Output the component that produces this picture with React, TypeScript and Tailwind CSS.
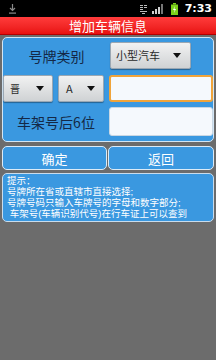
import React from 'react';

const FONT = { fontFamily: '"Noto Sans CJK SC", "Noto Sans", sans-serif' };
// latin primary font keeps line boxes short; CJK glyphs fall through to Noto
const TIP_FONT = { fontFamily: '"Liberation Sans", "Noto Sans CJK SC", sans-serif' };

// small black triangle used by spinner-like selects
const Caret: React.FC = () => (
  <svg width="8" height="5" viewBox="0 0 8 5" className="shrink-0">
    <path d="M0 0 L8 0 L4 5 Z" fill="#111" />
  </svg>
);

const Spinner: React.FC<{ label: string; className: string; textClass?: string }> = ({ label, className, textClass }) => (
  <div
    className={`flex items-center justify-between rounded-[2px] border border-[#9aa7b3] bg-linear-to-b from-[#f2f2f2] to-[#cfd2d4] shadow-[0_1px_1px_rgba(0,0,0,0.35)] ${className}`}
  >
    <span className={`text-[#2a2a2a] leading-none ${textClass ?? 'text-[11px]'}`}>{label}</span>
    <Caret />
  </div>
);

const StatusBar: React.FC = () => (
  <div className="flex h-[17px] items-center justify-between bg-black pl-[8px] pr-[4px]">
    <svg width="9" height="10" viewBox="0 0 9 10">
      <path d="M4.5 0 V6 M2 4 L4.5 6.5 L7 4" stroke="#8a8a8a" strokeWidth="1.2" fill="none" />
      <rect x="1" y="8.5" width="7" height="1.2" fill="#8a8a8a" />
    </svg>
    <div className="flex items-center">
      <svg width="8" height="10" viewBox="0 0 8 10" className="mr-[4px]">
        <rect x="0" y="1" width="3" height="1" fill="#bbb" />
        <rect x="0" y="3" width="3" height="1" fill="#bbb" />
        <rect x="0" y="5" width="3" height="1" fill="#bbb" />
        <rect x="4" y="1" width="3" height="1" fill="#bbb" />
        <rect x="4" y="3" width="3" height="1" fill="#bbb" />
        <rect x="0" y="7" width="7" height="1" fill="#bbb" />
        <rect x="2" y="9" width="3" height="1" fill="#bbb" />
      </svg>
      <svg width="12" height="10" viewBox="0 0 12 10" className="mr-[7px]">
        <rect x="0" y="7" width="2" height="3" fill="#d0d0d0" />
        <rect x="3" y="5" width="2" height="5" fill="#d0d0d0" />
        <rect x="6" y="3" width="2" height="7" fill="#d0d0d0" />
        <rect x="9" y="0" width="2" height="10" fill="#777" />
      </svg>
      <svg width="7" height="12" viewBox="0 0 7 12" className="mr-[7px]">
        <rect x="2" y="0" width="3" height="1.5" fill="#7cd11a" />
        <rect x="0" y="1.5" width="7" height="10.5" fill="#7cd11a" />
        <path d="M4 3 L2 7 H3.6 L3 10 L5 6 H3.4 Z" fill="#fff" />
      </svg>
      <span className="text-[11px] font-bold leading-none text-white" style={{ fontFamily: '"DejaVu Sans", sans-serif' }}>
        7:33
      </span>
    </div>
  </div>
);

export default function App() {
  return (
    <div className="h-[360px] w-[216px] overflow-hidden bg-[#6c6c6c]" style={FONT}>
      <StatusBar />
      <div className="flex h-[17px] items-center justify-center bg-linear-to-b from-[#ff3b3b] to-[#e80f0f] shadow-[0_1px_0_#b00000]">
        <span className="text-[13px] leading-none text-white">增加车辆信息</span>
      </div>

      <div className="ml-[2px] mt-[3px] w-[212px] rounded-[5px] border border-[#d3e6f5] bg-[#3a98e0] pb-[5px] pt-[4px]">
        <div className="flex items-center">
          <div className="w-[107px] text-center text-[14px] leading-none text-[#142846]">号牌类别</div>
          <Spinner label="小型汽车" className="h-[27px] w-[81px] pl-[5px] pr-[9px]" />
        </div>

        <div className="mt-[6px] flex items-center">
          <Spinner label="晋" className="h-[27px] w-[50px] pl-[6px] pr-[8px]" textClass="text-[10px]" />
          <Spinner label="A" className="ml-[5px] h-[27px] w-[46px] pl-[7px] pr-[8px]" />
          <div className="ml-[5px] h-[27px] w-[104px] rounded-[3px] border-2 border-[#f0a43a] bg-[#f5f9fd]" />
        </div>

        <div className="mt-[5px] flex items-center">
          <div className="w-[106px] text-center text-[14px] leading-none text-[#142846]">车架号后6位</div>
          <div className="h-[29px] w-[104px] rounded-[3px] border border-[#c9d7e3] bg-[#f5f9fd]" />
        </div>
      </div>

      <div className="ml-[2px] mt-[4px] flex w-[212px] gap-[1px]">
        <div className="flex h-[24px] w-[105px] items-center justify-center rounded-[5px] border border-[#dcebf7] bg-[#3a98e0]">
          <span className="text-[13px] leading-none text-white">确定</span>
        </div>
        <div className="flex h-[24px] w-[106px] items-center justify-center rounded-[5px] border border-[#dcebf7] bg-[#3a98e0]">
          <span className="text-[13px] leading-none text-white">返回</span>
        </div>
      </div>

      <div
        className="ml-[2px] mt-[3px] h-[49px] w-[212px] rounded-[5px] border border-[#c9dcec] bg-[#3a98e0] pl-[4px] pt-[1px] text-[9.5px] leading-[11px] text-white"
        style={TIP_FONT}
      >
        <div className="whitespace-nowrap">提示：</div>
        <div className="whitespace-nowrap">号牌所在省或直辖市直接选择;</div>
        <div className="whitespace-nowrap">号牌号码只输入车牌号的字母和数字部分;</div>
        <div className="whitespace-nowrap">&nbsp;车架号(车辆识别代号)在行车证上可以查到</div>
      </div>
    </div>
  );
}
